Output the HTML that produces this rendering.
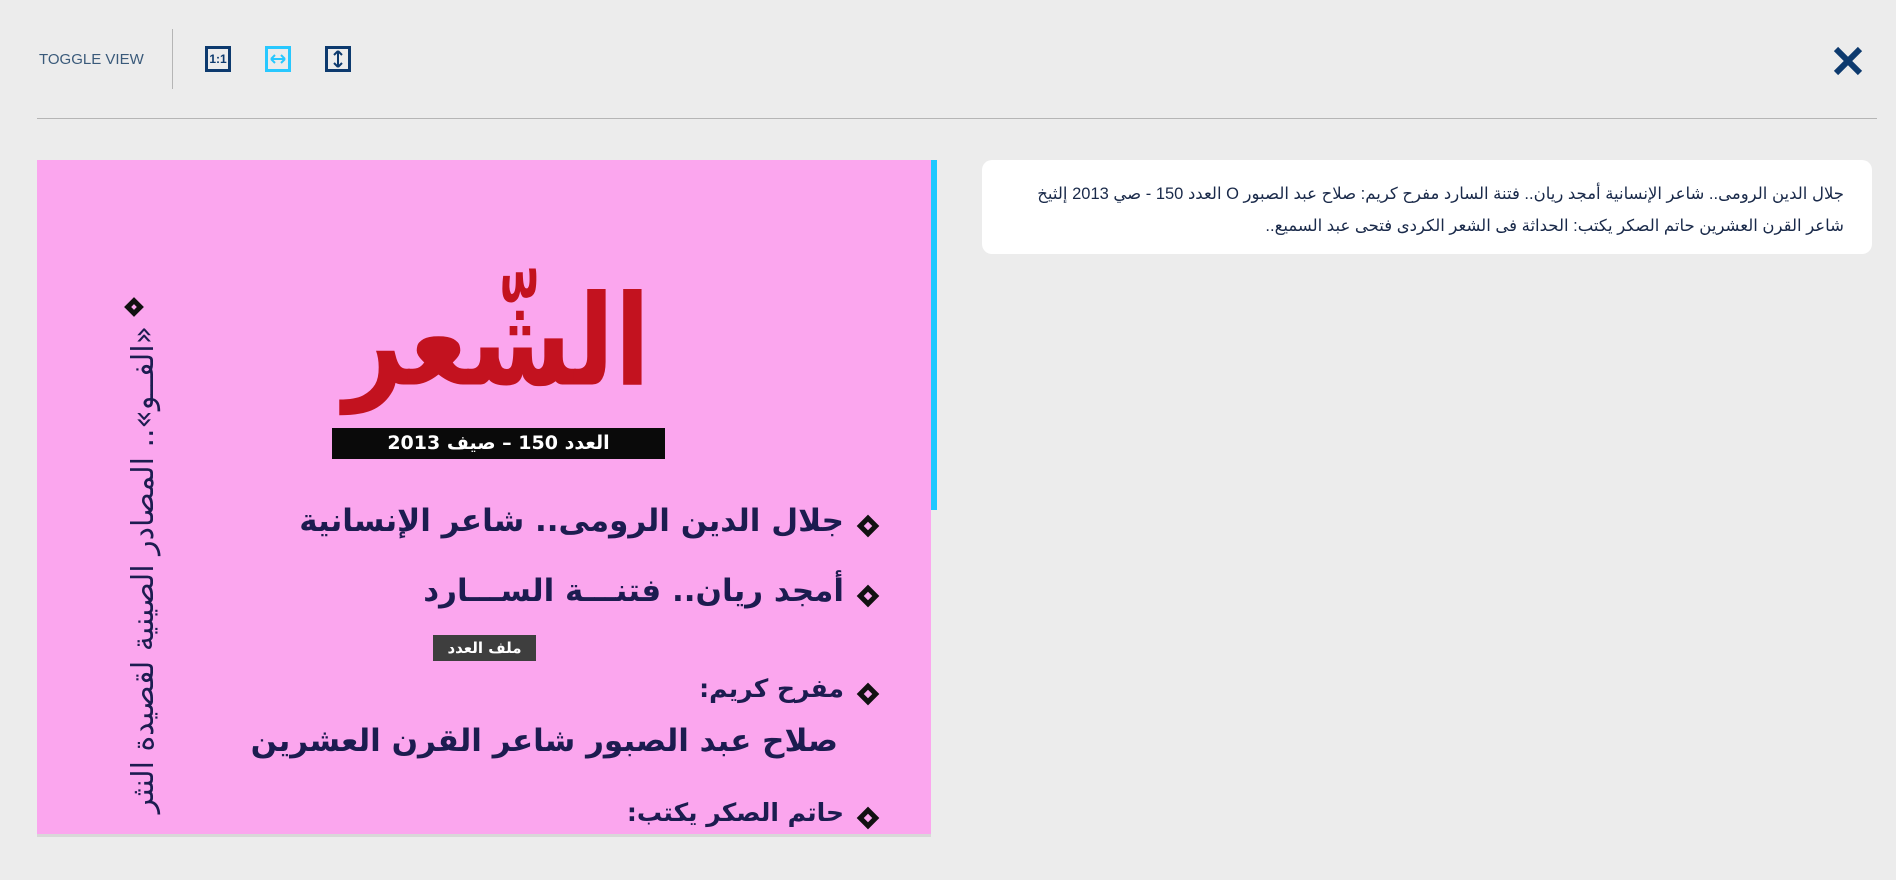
<!DOCTYPE html>
<html><head><meta charset="utf-8"><style>
*{margin:0;padding:0;box-sizing:border-box}
body{width:1896px;height:880px;background:#ececec;font-family:"Liberation Sans","DejaVu Sans",sans-serif;position:relative;overflow:hidden}
.abs{position:absolute}
.tv{left:39px;top:51px;font-size:15px;color:#3a5a7a;letter-spacing:0}
.sep{left:172px;top:29px;width:1px;height:60px;background:#b5b5b5}
.hr{left:37px;top:118px;width:1840px;height:1px;background:#b5b5b5}
.ic{width:26px;height:26px;border:3px solid #0d3a6e}
.cover{left:37px;top:160px;width:894px;height:677px;background:#fba6ee;overflow:hidden;border-bottom:3px solid #d8d8d8}
.bar{left:931px;top:160px;width:6px;height:350px;background:#1ec8ff}
.ar{font-family:"DejaVu Sans",sans-serif;direction:rtl;white-space:nowrap;color:#1c1c50;font-weight:bold}
.dia{width:16px;height:16px;border:5px solid #111;transform:rotate(45deg)}
.card{left:982px;top:160px;width:890px;height:94px;background:#fff;border-radius:10px}
.card p{direction:rtl;text-align:right;font-size:16.5px;color:#1a2a4a;line-height:32px;padding:18px 28px 0 0;font-family:"Liberation Sans","DejaVu Sans",sans-serif}
</style></head><body>
<div class="abs tv">TOGGLE VIEW</div>
<div class="abs sep"></div>
<div class="abs ic" style="left:205px;top:46px;font:bold 12px 'Liberation Sans',sans-serif;color:#0d3a6e;text-align:center;line-height:20px">1:1</div>
<div class="abs ic" style="left:265px;top:46px;border-color:#28c8ff">
<svg width="20" height="20" viewBox="0 0 20 20"><path d="M3 10H17M3 10L7 6M3 10L7 14M17 10L13 6M17 10L13 14" stroke="#28c8ff" stroke-width="2" fill="none"/></svg></div>
<div class="abs ic" style="left:325px;top:46px">
<svg width="20" height="20" viewBox="0 0 20 20"><path d="M10 2V18M10 2L6 6M10 2L14 6M10 18L6 14M10 18L14 14" stroke="#0d3a6e" stroke-width="2" fill="none"/></svg></div>
<svg class="abs" style="left:1833px;top:46px" width="30" height="30" viewBox="0 0 30 30"><path d="M3 3L27 27M27 3L3 27" stroke="#0d3a6e" stroke-width="6"/></svg>
<div class="abs hr"></div>

<div class="abs cover">
 <div class="abs ar" style="left:300px;top:105px;width:320px;text-align:center;font-size:105px;color:#c3121f;font-family:'DejaVu Serif','DejaVu Sans',serif;line-height:150px;transform:scaleY(1.2)">الشّعر</div>
 <div class="abs" style="left:295px;top:268px;width:333px;height:31px;background:#0a0a0a;color:#fff;font:bold 19px 'DejaVu Sans',sans-serif;text-align:center;line-height:31px;direction:rtl">العدد 150 – صيف 2013</div>
 <div class="abs dia" style="left:823px;top:358px"></div>
 <div class="abs ar" style="right:87px;top:343px;font-size:31px">جلال الدين الرومى.. شاعر الإنسانية</div>
 <div class="abs dia" style="left:823px;top:428px"></div>
 <div class="abs ar" style="right:87px;top:413px;font-size:31px">أمجد ريان.. فتنـــة الســـارد</div>
 <div class="abs" style="left:396px;top:475px;width:103px;height:26px;background:#3e3e3e;color:#fff;font:bold 15px 'DejaVu Sans',sans-serif;text-align:center;line-height:26px;direction:rtl">ملف العدد</div>
 <div class="abs dia" style="left:823px;top:526px"></div>
 <div class="abs ar" style="right:87px;top:514px;font-size:25px">مفرح كريم:</div>
 <div class="abs ar" style="right:93px;top:563px;font-size:31px">صلاح عبد الصبور شاعر القرن العشرين</div>
 <div class="abs dia" style="left:823px;top:650px"></div>
 <div class="abs ar" style="right:87px;top:638px;font-size:25px">حاتم الصكر يكتب:</div>
 <div class="abs dia" style="left:90px;top:140px;width:14px;height:14px"></div>
 <div class="abs ar" style="left:-158px;top:411px;width:530px;height:40px;font-size:30px;line-height:40px;text-align:right;font-weight:normal;transform:rotate(-90deg)">«الفــو».. المصادر الصينية لقصيدة النثر</div>
</div>
<div class="abs bar"></div>

<div class="abs card"><p>جلال الدين الرومى.. شاعر الإنسانية أمجد ريان.. فتنة السارد مفرح كريم: صلاح عبد الصبور O العدد 150 - صي 2013 إلثيخ<br>شاعر القرن العشرين حاتم الصكر يكتب: الحداثة فى الشعر الكردى فتحى عبد السميع..</p></div>
</body></html>
